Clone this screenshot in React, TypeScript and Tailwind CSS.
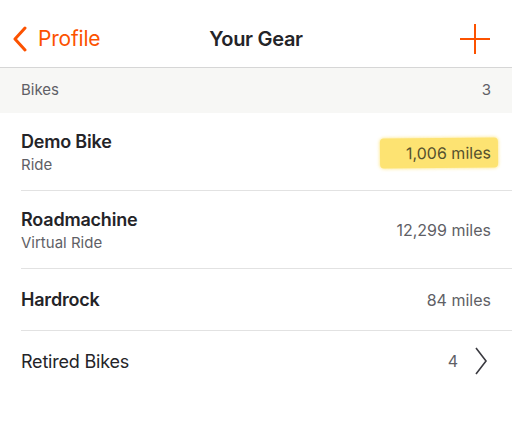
import React from "react";

const bikes = [
  { name: "Demo Bike", type: "Ride", miles: "1,006 miles", highlight: true },
  { name: "Roadmachine", type: "Virtual Ride", miles: "12,299 miles" },
  { name: "Hardrock", type: "", miles: "84 miles" },
];

export default function App() {
  return (
    <div
      className="h-[434px] w-[512px] overflow-hidden bg-white text-[#242428]"
      style={{ fontFamily: "Inter, 'Noto Sans', sans-serif" }}
    >
      <header className="relative flex h-[68px] items-center border-b border-[#d6d6d6] px-3 pt-[11px]">
        <div className="flex items-center gap-[10px] text-[#fc5200]">
          <svg width="16" height="26" viewBox="0 0 16 26" fill="none">
            <path d="M13 2 L3 13 L13 24" stroke="currentColor" strokeWidth="3" strokeLinecap="round" strokeLinejoin="round" />
          </svg>
          <span className="text-[21px] tracking-[-0.2px]">Profile</span>
        </div>
        <h1 className="absolute left-1/2 -translate-x-1/2 text-[20px] font-semibold tracking-[-0.3px]">
          Your Gear
        </h1>
        <svg className="ml-auto mr-[9px] text-[#fc5200]" width="32" height="32" viewBox="0 0 32 32">
          <path d="M16 1 V31 M1 16 H31" stroke="currentColor" strokeWidth="2" />
        </svg>
      </header>

      <div className="flex h-[45px] items-center justify-between bg-[#f7f7f5] px-[21px] text-[15px] text-[#5f5f66]">
        <span>Bikes</span>
        <span>3</span>
      </div>

      <ul className="pl-[21px]">
        {bikes.map((b) => (
          <li
            key={b.name}
            className={[
              "flex items-center justify-between border-b border-[#e2e2e2] pr-[21px]",
              b.type ? "h-[78px]" : "h-[62px]",
            ].join(" ")}
          >
            <div className="flex flex-col">
              <span className="text-[18px] font-semibold leading-[25px] tracking-[-0.2px]">{b.name}</span>
              {b.type && <span className="text-[15px] leading-[21px] text-[#5f5f66]">{b.type}</span>}
            </div>
            <span
              className={[
                "text-[16px] text-[#5f5f66]",
                b.highlight
                  ? "-mr-[7px] mt-[2px] rounded-[4px] bg-[#fde372] py-[3px] pl-[26px] pr-[7px] text-[#55512e] shadow-[0_0_3px_1px_#fde37299] -rotate-[0.5deg]"
                  : "",
              ].join(" ")}
            >
              {b.miles}
            </span>
          </li>
        ))}
        <li className="flex h-[60px] items-center justify-between pr-[24px]">
          <span className="text-[18px] tracking-[-0.2px]">Retired Bikes</span>
          <div className="flex items-center gap-[16px] text-[16px] text-[#5f5f66]">
            <span>4</span>
            <svg width="14" height="28" viewBox="0 0 14 28" fill="none">
              <path d="M2 1 L12 14 L2 27" stroke="#3a3a40" strokeWidth="1.6" />
            </svg>
          </div>
        </li>
      </ul>
    </div>
  );
}
